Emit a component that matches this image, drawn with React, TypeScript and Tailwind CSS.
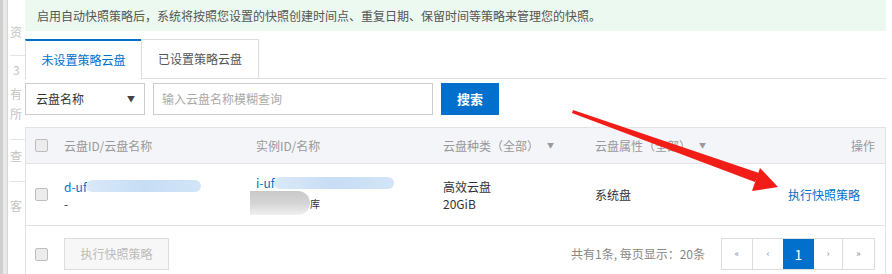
const font = { fontFamily: '"Noto Sans CJK SC", "Liberation Sans", sans-serif' }

function Box() {
  return <span className="block h-[13px] w-[13px] rounded-[2px] border border-[#bdbdbd] bg-[#ececec]" />
}

function Caret() {
  return <span className="ml-[8px] text-[7px] text-[#999]">▼</span>
}

function Blur({ w, className = '' }: { w: number; className?: string }) {
  return (
    <span
      className={`inline-block h-[12px] rounded-full bg-gradient-to-r from-[#dbe9f8] via-[#c6ddf5] to-[#d3e5f7] ${className}`}
      style={{ width: w }}
    />
  )
}

export default function App() {
  return (
    <div className="relative flex h-[274px] w-[892px] overflow-hidden bg-white text-[12px] text-[#333]" style={font}>
      {/* cut-off side panel */}
      <div className="flex w-[25px] shrink-0">
        <div className="w-[3px] bg-[#cfcfcf]" />
        <div className="w-[5px] border-r border-[#d6d6d6] bg-[#e9e9e9]" />
        <div className="flex flex-1 flex-col pl-[2px] text-[12px] leading-none text-[#c4c4c4]">
          <div className="h-[26px]" />
          <span>资</span>
          <div className="h-[18px] border-b border-[#e4e4e4]" />
          <span className="mt-[8px] pl-[3px]">3</span>
          <span className="mt-[12px]">有</span>
          <span className="mt-[8px]">所</span>
          <div className="h-[20px] border-b border-[#e4e4e4]" />
          <span className="mt-[10px]">查</span>
          <div className="h-[20px] border-b border-[#e4e4e4]" />
          <span className="mt-[18px]">客</span>
        </div>
      </div>

      <div className="flex w-[861px] flex-col">
        <div className="flex h-[31px] items-center bg-[#ebf9f0] pl-[12px] text-[#555]">
          启用自动快照策略后，系统将按照您设置的快照创建时间点、重复日期、保留时间等策略来管理您的快照。
        </div>

        {/* tabs */}
        <div className="mt-[8px] flex h-[40px]">
          <div className="flex w-[116px] items-center justify-center border-l border-t-2 border-t-[#0070cc] border-l-[#ddd] text-[#0070cc]">
            未设置策略云盘
          </div>
          <div className="flex w-[118px] items-center justify-center border border-[#ddd] text-[#555]">
            已设置策略云盘
          </div>
          <div className="flex-1 border-b border-[#ddd]" />
        </div>

        {/* filter */}
        <div className="mt-[4px] flex h-[32px] gap-[8px]">
          <div className="flex w-[120px] items-center justify-between border border-[#ccc] pl-[10px] pr-[9px]">
            <span>云盘名称</span>
            <span className="text-[8px] text-[#444]">▼</span>
          </div>
          <div className="flex w-[280px] items-center border border-[#ccc] pl-[8px] text-[#aaa]">
            输入云盘名称模糊查询
          </div>
          <div className="flex w-[58px] items-center justify-center bg-[#0070cc] text-[13px] font-bold text-white">
            搜索
          </div>
        </div>

        {/* table */}
        <div className="mt-[12px] flex flex-1 flex-col border-x border-t border-[#e3e3e3]">
          <div className="flex h-[36px] items-center border-b border-[#e3e3e3] bg-[#f4f5f9] text-[#999]">
            <div className="w-[38px] pl-[9px]"><Box /></div>
            <div className="w-[192px]">云盘ID/云盘名称</div>
            <div className="w-[187px]">实例ID/名称</div>
            <div className="flex w-[152px] items-center">云盘种类（全部）<Caret /></div>
            <div className="flex flex-1 items-center">云盘属性（全部）<Caret /></div>
            <div className="pr-[10px]">操作</div>
          </div>

          <div className="flex h-[62px] items-center border-b border-[#e3e3e3]">
            <div className="w-[38px] pl-[9px]"><Box /></div>
            <div className="flex w-[192px] flex-col leading-[17px]">
              <div className="flex items-center text-[#0070cc]">
                d-uf<Blur w={115} className="-ml-[1px]" />
              </div>
              <span>-</span>
            </div>
            <div className="flex w-[187px] flex-col leading-[17px]">
              <div className="flex items-center text-[#0070cc]">
                i-uf<Blur w={120} className="-ml-[1px]" />
              </div>
              <div className="flex items-center">
                <span className="-ml-[6px] inline-block h-[24px] w-[60px] rounded-r-full bg-gradient-to-b from-[#c9c9c9] via-[#d4d4d4] to-[#f0f0f0]" />
                <span className="text-[10px]">库</span>
              </div>
            </div>
            <div className="flex w-[152px] flex-col leading-[17px]">
              <span>高效云盘</span>
              <span>20GiB</span>
            </div>
            <div className="flex-1">系统盘</div>
            <div className="pr-[25px] text-[#0070cc]">执行快照策略</div>
          </div>

          <div className="flex flex-1 items-start pt-[12px]">
            <div className="flex h-[32px] w-[38px] items-center pl-[9px]"><Box /></div>
            <div className="flex h-[32px] w-[105px] items-center justify-center border border-[#ddd] bg-[#f7f7f7] text-[#bbb]">
              执行快照策略
            </div>
            <div className="flex h-[32px] flex-1 items-center justify-end pr-[16px] text-[#888]">
              共有1条, 每页显示：20条
            </div>
            <div className="mr-[10px] flex h-[32px] border border-[#ddd] text-[#888]">
              <span className="flex w-[30px] items-center justify-center text-[9px]">«</span>
              <span className="flex w-[31px] items-center justify-center border-l border-[#ddd] text-[9px]">‹</span>
              <span className="flex w-[31px] items-center justify-center bg-[#0070cc] text-[14px] text-white">1</span>
              <span className="flex w-[29px] items-center justify-center border-r border-[#ddd] text-[9px]">›</span>
              <span className="flex w-[31px] items-center justify-center text-[9px]">»</span>
            </div>
          </div>
        </div>
      </div>

      {/* red annotation arrow */}
      <svg className="pointer-events-none absolute left-0 top-0" width="892" height="274">
        <polygon points="573,110 759,173 755,182 572,113" fill="#f21d16" />
        <polygon points="778,187 760,168 752,191" fill="#f21d16" />
      </svg>
    </div>
  )
}
